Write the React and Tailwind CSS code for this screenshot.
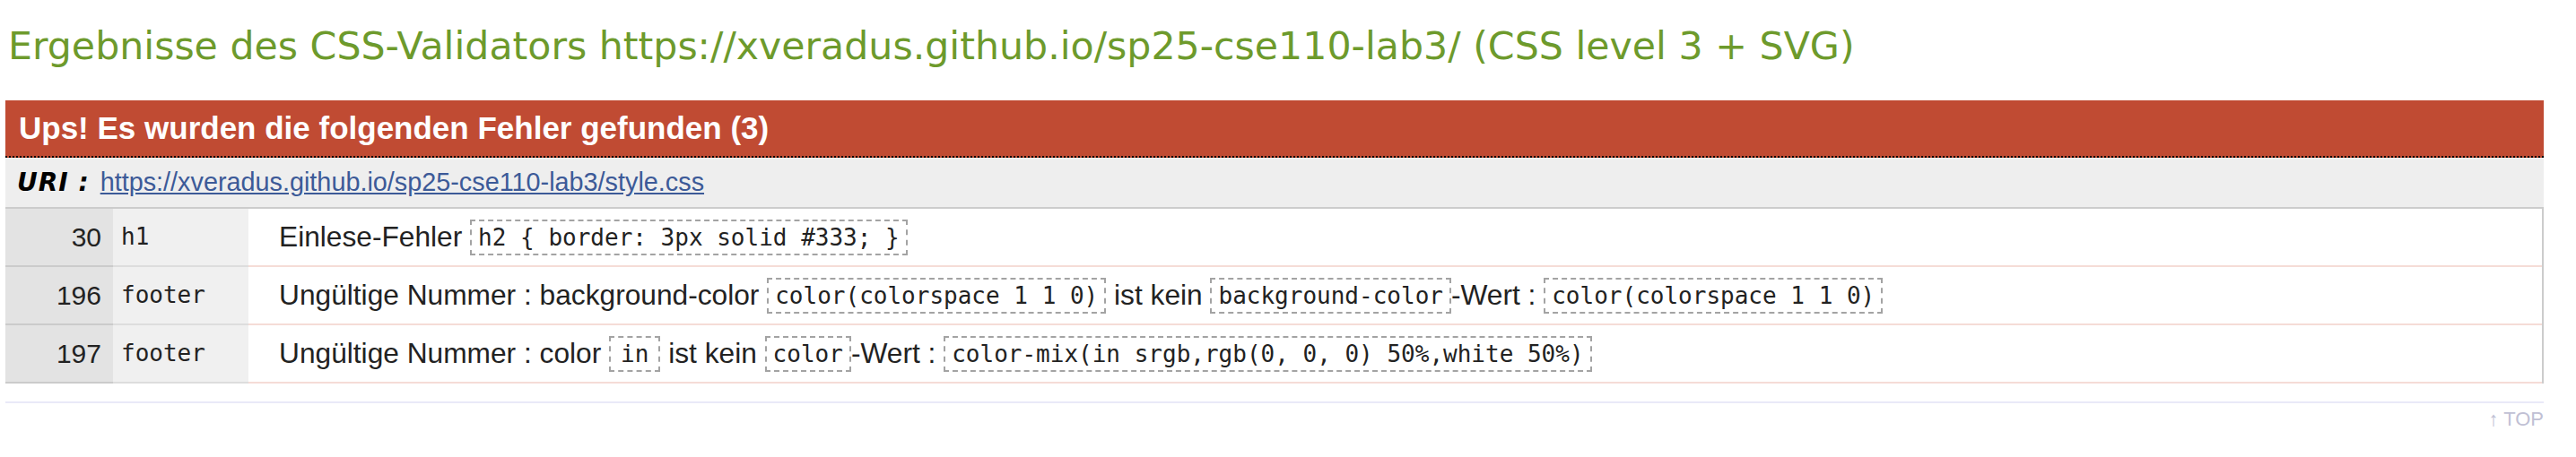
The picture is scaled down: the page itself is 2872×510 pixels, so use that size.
import React from "react";

const errors = [
  {
    line: "30",
    context: "h1",
    parts: [
      { t: "text", v: "Einlese-Fehler " },
      { t: "code", v: "h2 { border: 3px solid #333; }" },
    ],
  },
  {
    line: "196",
    context: "footer",
    parts: [
      { t: "text", v: "Ungültige Nummer : background-color " },
      { t: "code", v: "color(colorspace 1 1 0)" },
      { t: "text", v: " ist kein " },
      { t: "code", v: "background-color" },
      { t: "text", v: "-Wert : " },
      { t: "code", v: "color(colorspace 1 1 0)" },
    ],
  },
  {
    line: "197",
    context: "footer",
    parts: [
      { t: "text", v: "Ungültige Nummer : color " },
      { t: "code", v: "in", wide: true },
      { t: "text", v: " ist kein " },
      { t: "code", v: "color" },
      { t: "text", v: "-Wert : " },
      { t: "code", v: "color-mix(in srgb,rgb(0, 0, 0) 50%,white 50%)" },
    ],
  },
];

function Code({ children, wide }) {
  return (
    <span
      className={`inline-block border-2 border-dashed border-[#a3a3a3] ${wide ? "px-[11px]" : "px-[7px]"} h-[40px] leading-[36px] font-['DejaVu_Sans_Mono',monospace] text-[26px] text-[#222] whitespace-pre`}
    >
      {children}
    </span>
  );
}

export default function App() {
  return (
    <div className="w-[2872px] h-[510px] bg-white overflow-hidden">
      <h1 className="pt-[27px] pl-[9px] text-[42.7px] leading-[48px] font-normal text-[#6d9a2c] font-['DejaVu_Sans',sans-serif] whitespace-nowrap">
        Ergebnisse des CSS-Validators https://xveradus.github.io/sp25-cse110-lab3/ (CSS level 3 + SVG)
      </h1>

      <div className="mt-[37px] ml-[6px] w-[2830px]">
        <div className="h-[64px] bg-[#c04b33] border-b-2 border-dotted border-black pl-[15px] text-[35px] leading-[62px] font-bold text-white font-['Liberation_Sans',Arial,sans-serif]">
          Ups! Es wurden die folgenden Fehler gefunden (3)
        </div>

        <div className="h-[55px] bg-[#eeeeee] flex items-center pl-[13px] gap-[12px]">
          <span className="text-[28px] tracking-[1px] font-bold italic text-black font-['DejaVu_Sans',sans-serif]">
            URI :
          </span>
          <a
            href="#"
            className="text-[28.8px] text-[#3c5a98] underline font-['Liberation_Sans',Arial,sans-serif]"
          >
            https://xveradus.github.io/sp25-cse110-lab3/style.css
          </a>
        </div>

        <div className="border-t-2 border-r-2 border-[#cccccc]">
          {errors.map((e) => (
            <div key={e.line} className="flex h-[65px]">
              <div className="w-[120px] bg-[#e3e3e3] border-b-2 border-[#cbcbcb] flex items-center justify-end pr-[13px] text-[30px] text-[#222] font-['Liberation_Sans',Arial,sans-serif]">
                {e.line}
              </div>
              <div className="w-[151px] bg-[#f0f0f0] border-b-2 border-[#dddddd] flex items-center pl-[9px] text-[26px] text-[#222] font-['DejaVu_Sans_Mono',monospace]">
                {e.context}
              </div>
              <div className="flex-1 border-b-2 border-[#f5dcd7] flex items-center pl-[34px] text-[31.7px] text-[#222] font-['Liberation_Sans',Arial,sans-serif] whitespace-pre">
                {e.parts.map((p, i) =>
                  p.t === "code" ? (
                    <Code key={i} wide={p.wide}>
                      {p.v}
                    </Code>
                  ) : (
                    <span key={i}>{p.v}</span>
                  )
                )}
              </div>
            </div>
          ))}
        </div>

        <div className="mt-[20px] h-[2px] bg-[#e9e9f8]" />
        <div className="mt-[5px] text-right text-[22px] leading-[26px] text-[#c0c0d4] font-['Liberation_Sans',Arial,sans-serif]">
          ↑ TOP
        </div>
      </div>
    </div>
  );
}
